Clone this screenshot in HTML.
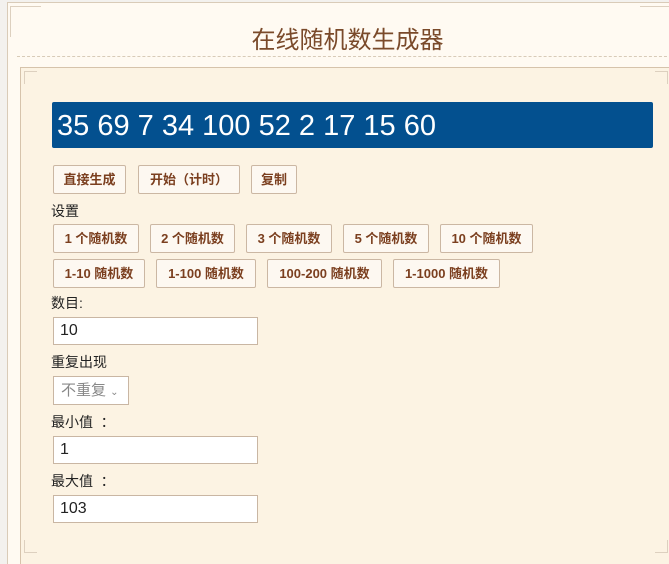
<!DOCTYPE html>
<html style="overflow:hidden;width:669px;height:564px"><head><meta charset="utf-8"><style>
body{margin:0;width:669px;height:564px;overflow:hidden;background:#f3f1ee;font-family:"Liberation Sans","Noto Sans CJK SC",sans-serif;position:relative}
.outer{position:absolute;left:7px;top:2px;width:680px;height:580px;background:#fffaf2;border:1px solid #d9cbb8}
.title{position:absolute;left:13px;top:20px;width:669px;text-align:center;font-size:24px;color:#7a4a2a}
.dash{position:absolute;left:17px;top:56px;width:660px;border-top:1px dashed #d8cbb8}
.inner{position:absolute;left:20px;top:67px;width:680px;height:520px;background:#fcf3e3;border:1px solid #d6c3ab}
.bar{position:absolute;left:52px;top:102px;width:601px;height:46px;background:#03508f;border-radius:2px;color:#fff;font-size:29px;line-height:48px;padding-left:5px;box-sizing:border-box}
.btn{position:absolute;height:29px;box-sizing:border-box;border:1px solid #cbb7a3;background:#fdf8f1;color:#7b3f1f;font-weight:bold;font-size:13px;line-height:27px;text-align:center;border-radius:2px}
.lbl{position:absolute;left:51px;font-size:14px;color:#222}
.inp{position:absolute;left:53px;width:205px;height:28px;box-sizing:border-box;background:#fff;border:1px solid #c9b6a3;font-size:16px;line-height:26px;padding-left:6px;color:#222}
.c{position:absolute;border:1px solid #ddd0bf;}
</style></head><body>
<div class="outer"></div>
<div class="c" style="left:10px;top:6px;border-right:none;border-bottom:none;width:30px;height:30px"></div>
<div class="c" style="left:640px;top:6px;border-left:none;border-bottom:none;width:30px;height:30px"></div>
<div class="title">在线随机数生成器</div>
<div class="dash"></div>
<div class="inner"></div>
<div class="c" style="left:24px;top:71px;border-right:none;border-bottom:none;width:12px;height:12px"></div>
<div class="c" style="left:24px;top:540px;border-right:none;border-top:none;width:12px;height:12px"></div>
<div class="c" style="left:655px;top:71px;border-left:none;border-bottom:none;width:12px;height:12px"></div>
<div class="c" style="left:655px;top:540px;border-left:none;border-top:none;width:12px;height:12px"></div>
<div class="bar">35 69 7 34 100 52 2 17 15 60</div>
<div class="btn" style="left:53px;top:165px;width:73px">直接生成</div>
<div class="btn" style="left:138px;top:165px;width:102px">开始（计时）</div>
<div class="btn" style="left:251px;top:165px;width:46px">复制</div>
<div class="lbl" style="top:201px">设置</div>
<div class="btn" style="left:53px;top:224px;width:86px">1 个随机数</div>
<div class="btn" style="left:150px;top:224px;width:85px">2 个随机数</div>
<div class="btn" style="left:246px;top:224px;width:86px">3 个随机数</div>
<div class="btn" style="left:343px;top:224px;width:86px">5 个随机数</div>
<div class="btn" style="left:440px;top:224px;width:93px">10 个随机数</div>
<div class="btn" style="left:53px;top:259px;width:92px">1-10 随机数</div>
<div class="btn" style="left:156px;top:259px;width:100px">1-100 随机数</div>
<div class="btn" style="left:267px;top:259px;width:115px">100-200 随机数</div>
<div class="btn" style="left:393px;top:259px;width:107px">1-1000 随机数</div>
<div class="lbl" style="top:293px">数目:</div>
<div class="inp" style="top:317px">10</div>
<div class="lbl" style="top:352px">重复出现</div>
<div style="position:absolute;left:53px;top:376px;width:76px;height:29px;box-sizing:border-box;background:#fff;border:1px solid #c9b6a3;color:#888;font-size:15px;line-height:27px;padding-left:7px">不重复 <span style="font-size:10px">&#8964;</span></div>
<div class="lbl" style="top:412px">最小值 &nbsp;：</div>
<div class="inp" style="top:436px">1</div>
<div class="lbl" style="top:471px">最大值 &nbsp;：</div>
<div class="inp" style="top:495px">103</div>
</body></html>
